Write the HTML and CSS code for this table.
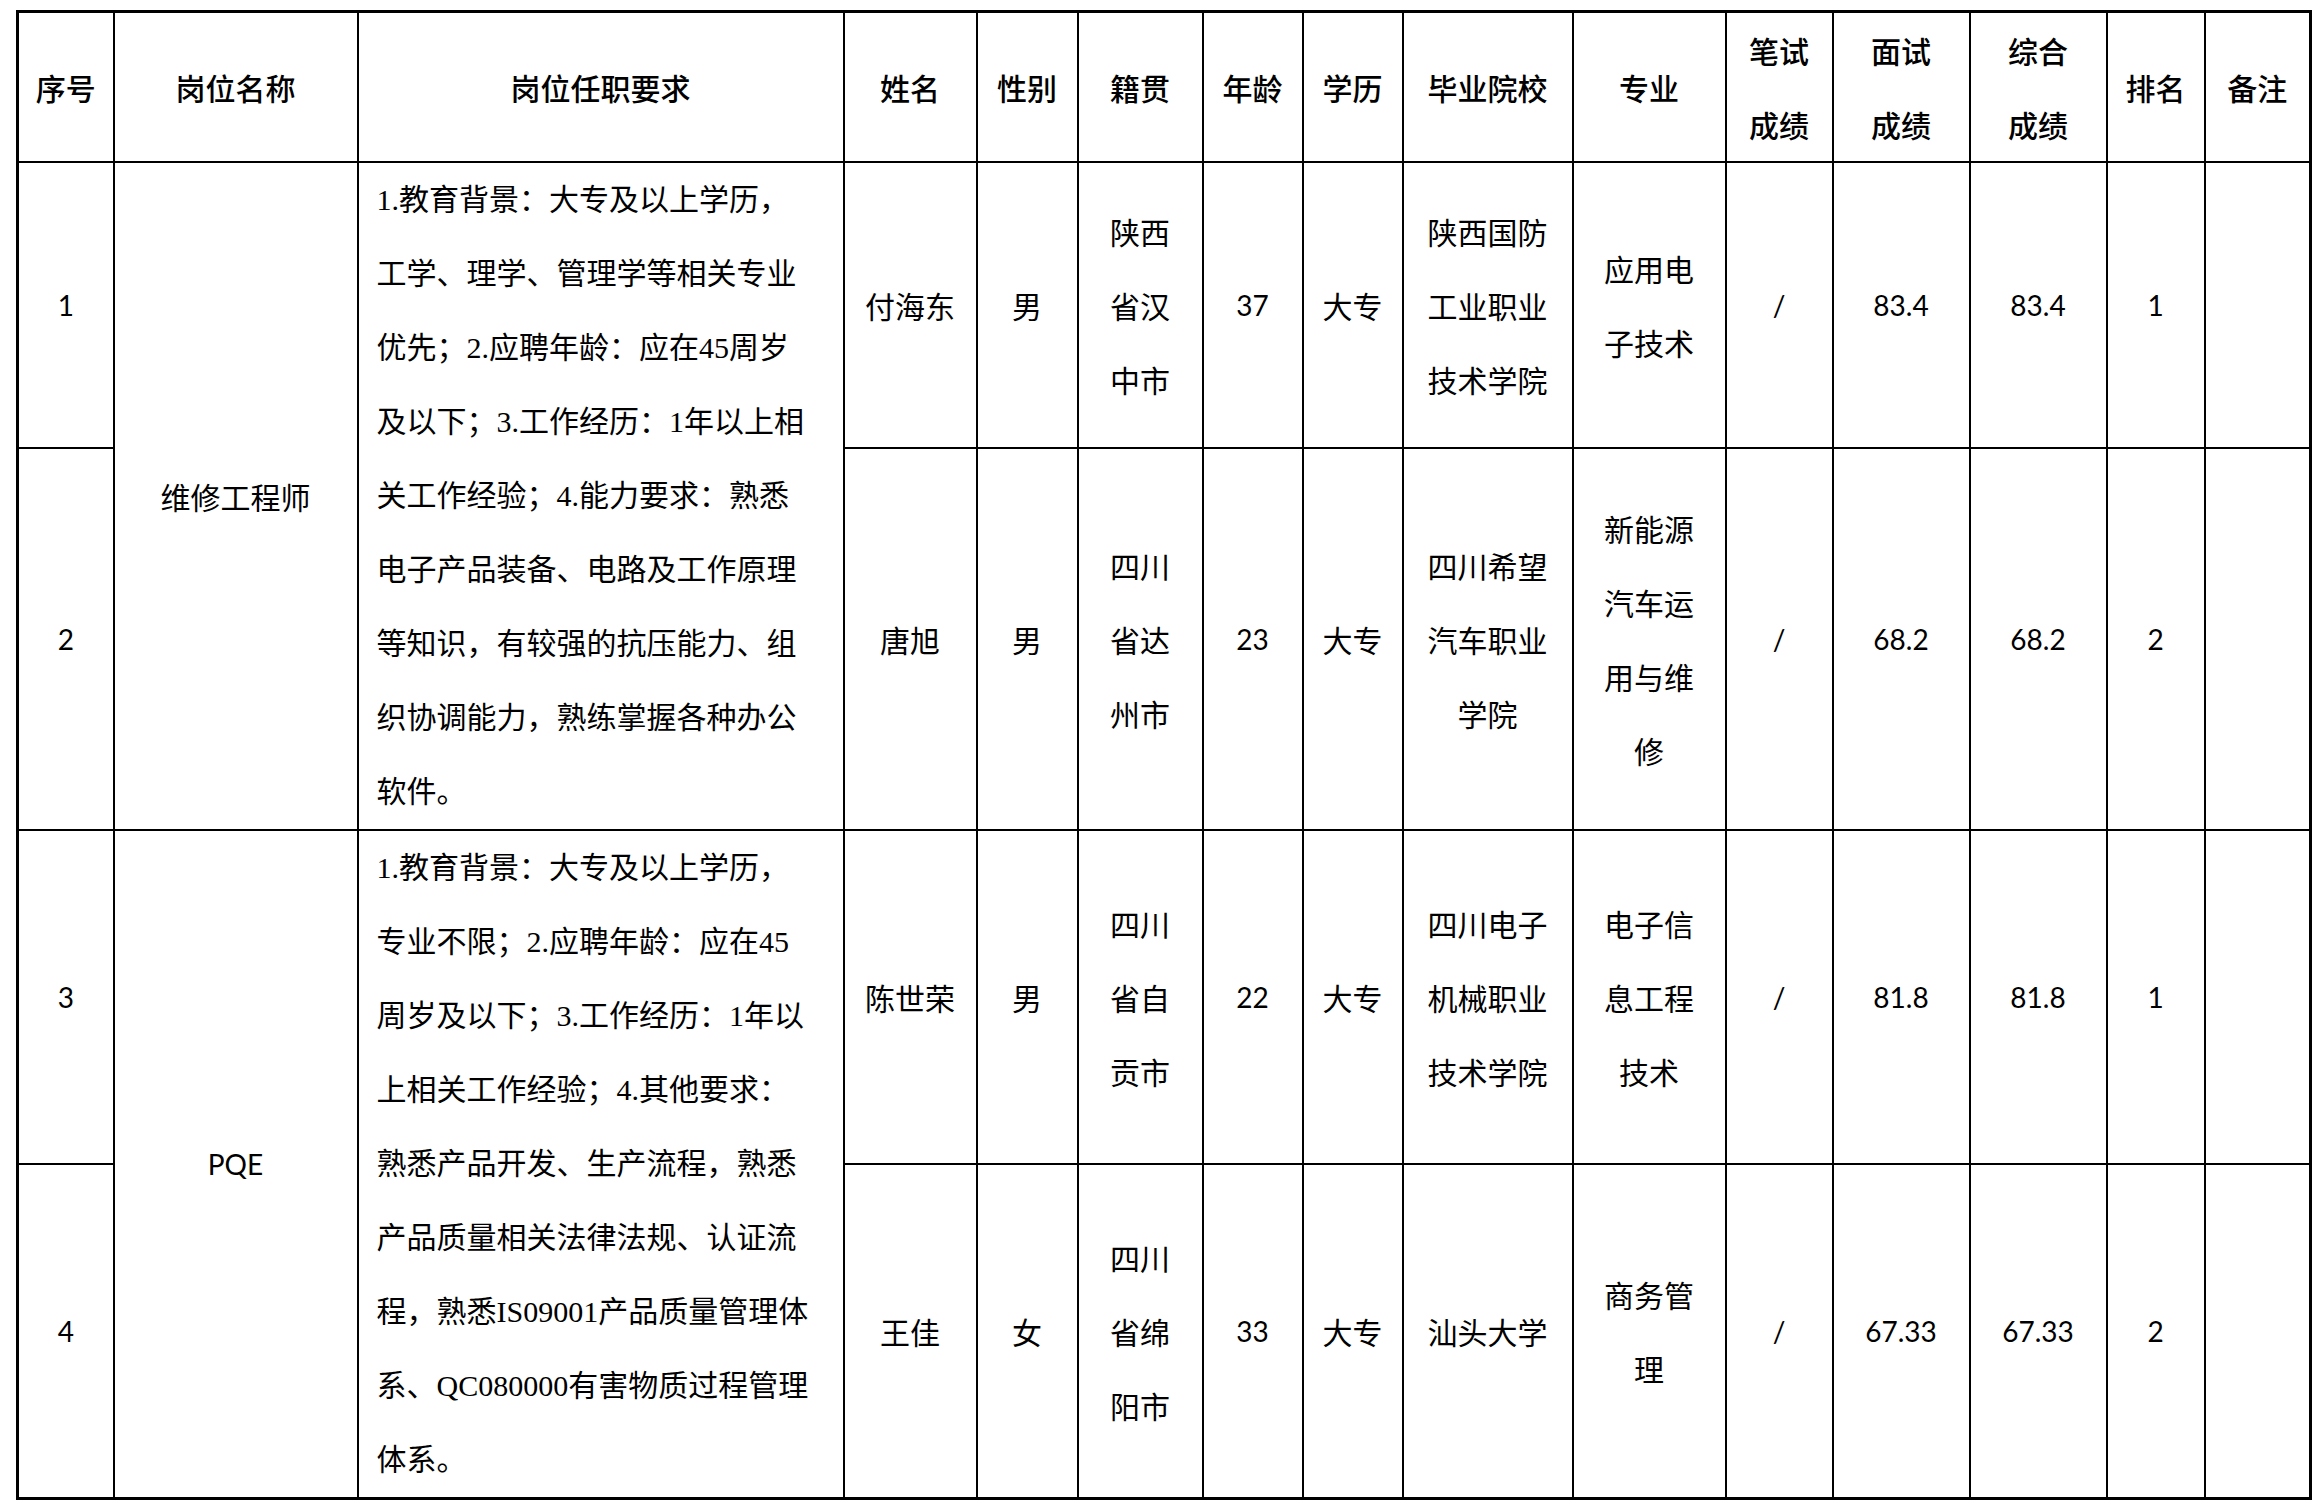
FILE: index.html
```html
<!DOCTYPE html>
<html lang="zh-CN">
<head>
<meta charset="utf-8">
<title>拟录用人员名单</title>
<link rel="stylesheet" href="styles.css">
</head>
<body>
<table class="roster">
  <colgroup>
    <col class="c-no"><col class="c-post"><col class="c-req"><col class="c-name"><col class="c-sex">
    <col class="c-origin"><col class="c-age"><col class="c-edu"><col class="c-school"><col class="c-major">
    <col class="c-written"><col class="c-interview"><col class="c-total"><col class="c-rank"><col class="c-note">
  </colgroup>
  <thead>
    <tr class="row-head">
      <th>序号</th><th>岗位名称</th><th>岗位任职要求</th><th>姓名</th><th>性别</th>
      <th>籍贯</th><th>年龄</th><th>学历</th><th>毕业院校</th><th>专业</th>
      <th>笔试<br>成绩</th><th>面试<br>成绩</th><th>综合<br>成绩</th><th>排名</th><th>备注</th>
    </tr>
  </thead>
  <tbody>
    <tr class="row-1">
      <td class="num">1</td>
      <td rowspan="2">维修工程师</td>
      <td rowspan="2" class="req">
        <span class="ln">1.教育背景：大专及以上学历，</span>
        <span class="ln">工学、理学、管理学等相关专业</span>
        <span class="ln">优先；2.应聘年龄：应在45周岁</span>
        <span class="ln">及以下；3.工作经历：1年以上相</span>
        <span class="ln">关工作经验；4.能力要求：熟悉</span>
        <span class="ln">电子产品装备、电路及工作原理</span>
        <span class="ln">等知识，有较强的抗压能力、组</span>
        <span class="ln">织协调能力，熟练掌握各种办公</span>
        <span class="ln">软件。</span>
      </td>
      <td>付海东</td><td>男</td><td>陕西<br>省汉<br>中市</td><td class="num">37</td><td>大专</td>
      <td>陕西国防<br>工业职业<br>技术学院</td><td>应用电<br>子技术</td>
      <td class="num">/</td><td class="num">83.4</td><td class="num">83.4</td><td class="num">1</td><td></td>
    </tr>
    <tr class="row-2">
      <td class="num">2</td>
      <td>唐旭</td><td>男</td><td>四川<br>省达<br>州市</td><td class="num">23</td><td>大专</td>
      <td>四川希望<br>汽车职业<br>学院</td><td>新能源<br>汽车运<br>用与维<br>修</td>
      <td class="num">/</td><td class="num">68.2</td><td class="num">68.2</td><td class="num">2</td><td></td>
    </tr>
    <tr class="row-3">
      <td class="num">3</td>
      <td rowspan="2" class="num">PQE</td>
      <td rowspan="2" class="req">
        <span class="ln">1.教育背景：大专及以上学历，</span>
        <span class="ln">专业不限；2.应聘年龄：应在45</span>
        <span class="ln">周岁及以下；3.工作经历：1年以</span>
        <span class="ln">上相关工作经验；4.其他要求：</span>
        <span class="ln">熟悉产品开发、生产流程，熟悉</span>
        <span class="ln">产品质量相关法律法规、认证流</span>
        <span class="ln">程，熟悉IS09001产品质量管理体</span>
        <span class="ln">系、QC080000有害物质过程管理</span>
        <span class="ln">体系。</span>
      </td>
      <td>陈世荣</td><td>男</td><td>四川<br>省自<br>贡市</td><td class="num">22</td><td>大专</td>
      <td>四川电子<br>机械职业<br>技术学院</td><td>电子信<br>息工程<br>技术</td>
      <td class="num">/</td><td class="num">81.8</td><td class="num">81.8</td><td class="num">1</td><td></td>
    </tr>
    <tr class="row-4">
      <td class="num">4</td>
      <td>王佳</td><td>女</td><td>四川<br>省绵<br>阳市</td><td class="num">33</td><td>大专</td>
      <td>汕头大学</td><td>商务管<br>理</td>
      <td class="num">/</td><td class="num">67.33</td><td class="num">67.33</td><td class="num">2</td><td></td>
    </tr>
  </tbody>
</table>
</body>
</html>
```

FILE: styles.css
```css
html, body {
  margin: 0;
  padding: 0;
  background: #ffffff;
}

body {
  font-family: "Noto Sans CJK SC", sans-serif;
  font-size: 30px;
  color: #000000;
}

.roster {
  border-collapse: collapse;
  table-layout: fixed;
  width: 2294px;
  margin: 10px 0 0 16px;
  border: 3px solid #000000;
}

.roster th,
.roster td {
  border: 2px solid #000000;
  padding: 0 2px;
  text-align: center;
  vertical-align: middle;
  line-height: 74px;
  white-space: nowrap;
  font-weight: normal;
}

.roster th {
  font-weight: 500;
}

.c-no { width: 96px; }
.c-post { width: 244px; }
.c-req { width: 486px; }
.c-name { width: 133px; }
.c-sex { width: 101px; }
.c-origin { width: 125px; }
.c-age { width: 100px; }
.c-edu { width: 100px; }
.c-school { width: 170px; }
.c-major { width: 153px; }
.c-written { width: 107px; }
.c-interview { width: 137px; }
.c-total { width: 137px; }
.c-rank { width: 98px; }
.c-note { width: 106px; }

.row-head { height: 149px; }
.row-1 { height: 285px; }
.row-2 { height: 381px; }
.row-3 { height: 332px; }
.row-4 { height: 332px; }

.roster td.num {
  font-family: "Lato", "Noto Sans CJK SC", sans-serif;
  font-size: 28px;
}

.roster td.req {
  text-align: left;
  padding: 0 0 0 18px;
  font-family: "Liberation Serif", "Noto Sans CJK SC", serif;
}

.req .ln {
  display: block;
}
```
